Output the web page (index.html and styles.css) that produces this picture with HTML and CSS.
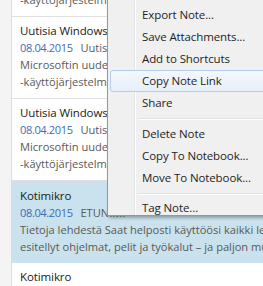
FILE: index.html
```html
<!DOCTYPE html>
<html>
<head>
<meta charset="utf-8">
<link rel="stylesheet" href="styles.css">
</head>
<body>
<div class="app">
  <div class="side"></div>
  <div class="list">
    <div class="note">
      <div class="title">Uutisia Windows 10:stä</div>
      <div class="line"><span class="date">08.04.2015</span> Uutisia Windows 10:stä</div>
      <div class="line">Microsoftin uudesta Windows 10</div>
      <div class="line">-käyttöjärjestelmästä</div>
    </div>
    <div class="note">
      <div class="title">Uutisia Windows 10:stä</div>
      <div class="line"><span class="date">08.04.2015</span> Uutisia Windows 10:stä</div>
      <div class="line">Microsoftin uudesta Windows 10</div>
      <div class="line">-käyttöjärjestelmästä</div>
    </div>
    <div class="note">
      <div class="title">Uutisia Windows 10:stä</div>
      <div class="line"><span class="date">08.04.2015</span> Uutisia Windows 10:stä</div>
      <div class="line">Microsoftin uudesta Windows 10</div>
      <div class="line">-käyttöjärjestelmästä</div>
    </div>
    <div class="note selected">
      <div class="title">Kotimikro</div>
      <div class="line"><span class="date">08.04.2015</span> ETUNIMI</div>
      <div class="line">Tietoja lehdestä Saat helposti käyttöösi kaikki lehdessä</div>
      <div class="line">esitellyt ohjelmat, pelit ja työkalut – ja paljon muuta</div>
    </div>
    <div class="note">
      <div class="title">Kotimikro</div>
      <div class="line"><span class="date">08.04.2015</span> Kotimikro</div>
    </div>
  </div>
  <div class="menu">
    <div class="mi">Email Note...</div>
    <div class="mi">Export Note...</div>
    <div class="mi">Save Attachments...</div>
    <div class="mi">Add to Shortcuts</div>
    <div class="mi hot">Copy Note Link</div>
    <div class="mi">Share</div>
    <div class="sep"></div>
    <div class="mi">Delete Note</div>
    <div class="mi">Copy To Notebook...</div>
    <div class="mi">Move To Notebook...</div>
    <div class="sep short"></div>
    <div class="mi last">Tag Note...</div>
  </div>
</div>
</body>
</html>
```

FILE: styles.css
```css
html, body {
  margin: 0;
  padding: 0;
  width: 263px;
  height: 286px;
  overflow: hidden;
  background: #ffffff;
}

.app {
  position: relative;
  display: flex;
  width: 263px;
  height: 286px;
  overflow: hidden;
  font-family: "Open Sans", "Noto Sans", sans-serif;
}

.side {
  width: 11px;
  flex: none;
  background: #f4f4f4;
  border-right: 1px solid #dcdcdc;
}

.list {
  flex: 1;
  min-width: 0;
  margin-top: -65px;
  background: #ffffff;
}

.note {
  padding: 5px 0 8px 8px;
  border-bottom: 1px solid #e1e1e1;
  white-space: nowrap;
  overflow: hidden;
}

.note.selected {
  padding-top: 6px;
  padding-bottom: 7px;
  background: #c9e2ed;
  border-bottom-color: #c9e2ed;
}

.title {
  font-size: 11.5px;
  letter-spacing: -0.1px;
  line-height: 17px;
  color: #1a1a1a;
}

.line {
  font-size: 11.1px;
  line-height: 17px;
  color: #595959;
}

.date {
  color: #3f6db3;
  letter-spacing: -0.4px;
  margin-right: 5px;
}

.menu {
  position: absolute;
  left: 107px;
  top: -21px;
  width: 200px;
  padding: 2px 2px 0;
  background-color: #f0f0f0;
  background-image: linear-gradient(to right, transparent 26px, #e2e3e3 26px, #e2e3e3 27px, #ffffff 27px, #ffffff 28px, transparent 28px);
  border: 1px solid #979797;
  box-shadow: 2px 2px 3px rgba(0, 0, 0, 0.3);
  font-size: 11.5px;
  letter-spacing: -0.1px;
  color: #1e1e1e;
}

.mi {
  height: 22px;
  line-height: 22px;
  padding-left: 32px;
  box-sizing: border-box;
  white-space: nowrap;
}

.mi.last {
  height: 18px;
  line-height: 21px;
}

.mi.hot {
  border: 1px solid #b3d0ee;
  border-radius: 3px;
  line-height: 20px;
  padding-left: 31px;
  background: linear-gradient(#f4f8fd, #e6eff9);
}

.sep {
  height: 9px;
  margin-left: 28px;
  background: linear-gradient(transparent 4px, #e0e0e0 4px, #e0e0e0 5px, #ffffff 5px, #ffffff 6px, transparent 6px);
}

.sep.short {
  height: 8px;
}
```
